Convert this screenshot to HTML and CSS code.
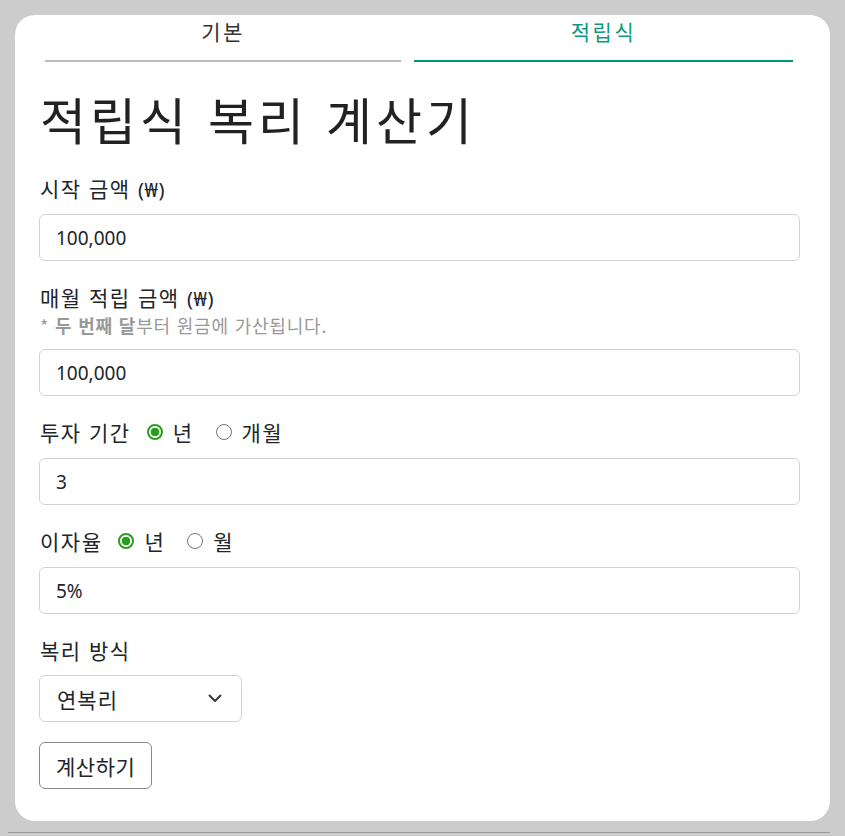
FILE: index.html
```html
<!DOCTYPE html>
<html lang="ko">
<head>
<meta charset="utf-8">
<title>적립식 복리 계산기</title>
<link rel="stylesheet" href="styles.css">
</head>
<body>
<div class="card">
  <nav class="tabs">
    <a class="tab tab-basic">기본</a>
    <a class="tab tab-active">적립식</a>
  </nav>
  <h1 class="title">적립식 복리 계산기</h1>
  <form class="form">
    <div class="group">
      <div class="label-row">
        <label class="label">시작 금액 <span class="won">(₩)</span></label>
      </div>
      <input class="control" type="text" value="100,000">
    </div>
    <div class="group">
      <div class="label-row label-stack">
        <label class="label">매월 적립 금액 <span class="won">(₩)</span></label>
        <span class="hint">* <b>두 번째 달</b>부터 원금에 가산됩니다.</span>
      </div>
      <input class="control" type="text" value="100,000">
    </div>
    <div class="group">
      <div class="label-row">
        <label class="label">투자 기간</label>
        <label class="radio"><input type="radio" name="period" checked><span>년</span></label>
        <label class="radio"><input type="radio" name="period"><span>개월</span></label>
      </div>
      <input class="control" type="text" value="3">
    </div>
    <div class="group">
      <div class="label-row">
        <label class="label">이자율</label>
        <label class="radio"><input type="radio" name="rate" checked><span>년</span></label>
        <label class="radio"><input type="radio" name="rate"><span>월</span></label>
      </div>
      <input class="control" type="text" value="5%">
    </div>
    <div class="group">
      <div class="label-row label-tight">
        <label class="label">복리 방식</label>
      </div>
      <div class="select">
        <span>연복리</span>
        <svg class="chevron" width="14" height="9" viewBox="0 0 14 9"><path d="M1.5 1.5 L7 7 L12.5 1.5" fill="none" stroke="#343a40" stroke-width="2" stroke-linecap="round" stroke-linejoin="round"/></svg>
      </div>
    </div>
    <button class="btn" type="button">계산하기</button>
  </form>
</div>
<div class="footer-line"></div>
</body>
</html>
```
FILE: styles.css
```css
html, body {
  margin: 0;
  padding: 0;
}
body {
  background: #cccccc;
  font-family: "Noto Sans", "Noto Sans CJK KR", sans-serif;
  color: #212529;
  padding-top: 15px;
}
.card {
  background: #ffffff;
  margin: 0 15px;
  border-radius: 20px;
  padding: 1px 30px 32px 24px;
}
.tabs {
  display: flex;
  gap: 13px;
  margin: 0 7px 0 6px;
}
.tab {
  text-align: center;
  font-family: "Noto Sans CJK KR", sans-serif;
  font-size: 21px;
  letter-spacing: 2.5px;
  line-height: 30px;
  height: 30px;
  padding-bottom: 14px;
  border-bottom: 2px solid #bbbbbb;
  color: #333333;
}
.tab-basic { flex: 356 1 0; }
.tab-active {
  flex: 379 1 0;
  color: #0a9a7c;
  border-bottom-color: #00967a;
}
.title {
  font-family: "Noto Sans CJK KR", sans-serif;
  font-weight: 400;
  font-size: 50px;
  letter-spacing: 4px;
  line-height: 58px;
  height: 58px;
  margin: 27px 0 26px 1px;
  color: #222222;
}
.form {
  display: flex;
  flex-direction: column;
}
.group {
  margin-bottom: 21px;
}
.label-row {
  display: flex;
  align-items: center;
  margin-bottom: 11px;
}
.label-tight {
  margin-bottom: 10px;
}
.label-stack {
  flex-direction: column;
  align-items: flex-start;
}
.label {
  font-family: "Noto Sans CJK KR", sans-serif;
  font-size: 21px;
  letter-spacing: 1.5px;
  line-height: 30px;
  height: 30px;
  margin-left: 1px;
}
.won {
  font-family: "Noto Sans", sans-serif;
  font-size: 20px;
  line-height: 1;
  letter-spacing: 0.5px;
}
.hint {
  font-family: "Noto Sans CJK KR", sans-serif;
  font-size: 18px;
  letter-spacing: 0.8px;
  line-height: 26px;
  height: 26px;
  color: #999999;
  margin-left: 1px;
}
.hint b {
  font-weight: 700;
}
.radio {
  display: flex;
  align-items: center;
  font-family: "Noto Sans CJK KR", sans-serif;
  font-size: 21px;
  letter-spacing: 1.5px;
  line-height: 30px;
  height: 30px;
  margin-left: 16px;
}
.radio + .radio {
  margin-left: 22px;
}
.radio input {
  appearance: none;
  -webkit-appearance: none;
  flex: none;
  box-sizing: border-box;
  width: 16px;
  height: 16px;
  margin: 0 10px 0 0;
  border: 1.5px solid #767676;
  border-radius: 50%;
  background: #fff;
}
.radio input:checked {
  border: 2px solid #2a9d20;
  background: radial-gradient(circle, #2a9d20 0 4px, #fff 4.6px);
}
.control {
  display: block;
  box-sizing: border-box;
  width: 100%;
  height: 47px;
  padding: 0 16px;
  font-family: "Noto Sans", "Noto Sans CJK KR", sans-serif;
  font-size: 19px;
  color: #212529;
  border: 1px solid #ced4da;
  border-radius: 6px;
  background: #fff;
  outline: none;
}
.select {
  box-sizing: border-box;
  width: 203px;
  height: 47px;
  border: 1px solid #ced4da;
  border-radius: 6px;
  display: flex;
  align-items: center;
  justify-content: space-between;
  padding: 0 19px 0 17px;
  font-family: "Noto Sans CJK KR", sans-serif;
  font-size: 21px;
  letter-spacing: 1px;
}
.btn {
  align-self: flex-start;
  box-sizing: border-box;
  height: 47px;
  padding: 0 16px;
  font-family: "Noto Sans CJK KR", sans-serif;
  font-size: 21px;
  letter-spacing: 0.5px;
  color: #212529;
  background: #fff;
  border: 1px solid #8a8a8a;
  border-radius: 6px;
  margin-top: -1px;
}
.footer-line {
  margin: 11px 15px 0 8px;
  border-top: 1px solid #999999;
}
```
